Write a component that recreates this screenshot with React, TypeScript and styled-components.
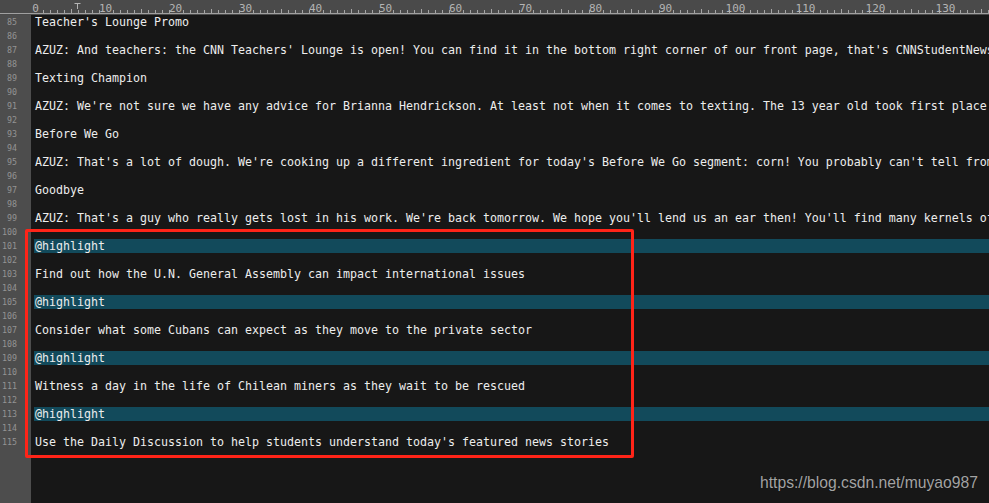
import React from "react";
import styled, { createGlobalStyle } from "styled-components";

const Global = createGlobalStyle`
  html, body { margin: 0; padding: 0; background: #171717; }
  body { width: 989px; height: 503px; overflow: hidden; }
`;

const Page = styled.div`
  position: relative;
  width: 989px;
  height: 503px;
  display: flex;
  flex-direction: column;
  background: #171717;
  overflow: hidden;
`;

const RulerBar = styled.div`
  height: 15px;
  flex: none;
  background: #4a4a4a;
`;

const Body = styled.div`
  flex: 1;
  display: flex;
  min-height: 0;
`;

const Gutter = styled.div`
  width: 31px;
  flex: none;
  background: #4d4d4d;
  display: flex;
  flex-direction: column;
`;

const LineNo = styled.div`
  height: 14px;
  width: 17px;
  text-align: right;
  font-family: "DejaVu Sans Mono", monospace;
  font-size: 8.3px;
  line-height: 14px;
  color: #949494;
`;

const Editor = styled.div`
  flex: 1;
  display: flex;
  flex-direction: column;
  overflow: hidden;
`;

const CodeLine = styled.div<{ $hl?: boolean }>`
  height: 14px;
  margin-left: 3px;
  padding-left: 1px;
  background: ${(p) => (p.$hl ? "#124a5b" : "transparent")};
  font-family: "DejaVu Sans Mono", monospace;
  font-size: 11.63px;
  line-height: 14px;
  color: #ededed;
  white-space: pre;
  overflow: hidden;
`;

const Marker = styled.div`
  position: absolute;
  left: 25px;
  top: 229px;
  width: 603px;
  height: 223px;
  border: 3px solid #ff2418;
  border-radius: 2px;
  pointer-events: none;
`;

const Watermark = styled.div`
  position: absolute;
  right: 11px;
  top: 475px;
  font-family: "Liberation Sans", Arial, sans-serif;
  font-size: 15.7px;
  line-height: 1;
  color: #a3a3a3;
  text-shadow: 0 0 1px rgba(0, 0, 0, 0.6);
`;

const lines: string[] = [
  "Teacher's Lounge Promo",
  "",
  "AZUZ: And teachers: the CNN Teachers' Lounge is open! You can find it in the bottom right corner of our front page, that's CNNStudentNews.com.",
  "",
  "Texting Champion",
  "",
  "AZUZ: We're not sure we have any advice for Brianna Hendrickson. At least not when it comes to texting. The 13 year old took first place in the national championship.",
  "",
  "Before We Go",
  "",
  "AZUZ: That's a lot of dough. We're cooking up a different ingredient for today's Before We Go segment: corn! You probably can't tell from this picture.",
  "",
  "Goodbye",
  "",
  "AZUZ: That's a guy who really gets lost in his work. We're back tomorrow. We hope you'll lend us an ear then! You'll find many kernels of news.",
  "",
  "@highlight",
  "",
  "Find out how the U.N. General Assembly can impact international issues",
  "",
  "@highlight",
  "",
  "Consider what some Cubans can expect as they move to the private sector",
  "",
  "@highlight",
  "",
  "Witness a day in the life of Chilean miners as they wait to be rescued",
  "",
  "@highlight",
  "",
  "Use the Daily Discussion to help students understand today's featured news stories",
];

const FIRST = 85;
const COL0 = 35.5;
const CW = 7;

function Ruler() {
  const ticks: React.ReactNode[] = [];
  const labels: React.ReactNode[] = [];
  for (let c = 0; c <= 136; c++) {
    const x = Math.round(COL0 + c * CW) + 0.5;
    const h = c % 10 === 0 ? 0 : c % 5 === 0 ? 4 : 3;
    if (h) ticks.push(<line key={c} x1={x} x2={x} y1={13} y2={13 - h} stroke="#a6a6a6" strokeWidth={1} />);
    if (c % 10 === 0) {
      labels.push(
        <text
          key={"t" + c}
          x={COL0 + c * CW}
          y={12}
          textAnchor="middle"
          fontFamily="DejaVu Sans Mono, monospace"
          fontSize={11}
          fill="#b4b4b4"
        >
          {c}
        </text>
      );
    }
  }
  return (
    <RulerBar>
      <svg width={989} height={15} style={{ display: "block" }}>
        <line x1={0} x2={989} y1={13.5} y2={13.5} stroke="#a0a0a0" strokeWidth={1} />
        {ticks}
        {labels}
        <path d="M74.5 3.5 H80.5 M77.5 3.5 V9" stroke="#b4b4b4" strokeWidth={1} fill="none" />
      </svg>
    </RulerBar>
  );
}

export default function App() {
  return (
    <>
      <Global />
      <Page>
        <Ruler />
        <Body>
          <Gutter>
            {lines.map((_, i) => (
              <LineNo key={i}>{FIRST + i}</LineNo>
            ))}
          </Gutter>
          <Editor>
            {lines.map((t, i) => (
              <CodeLine key={i} $hl={t === "@highlight"}>
                {t}
              </CodeLine>
            ))}
          </Editor>
        </Body>
        <Marker />
        <Watermark>https://blog.csdn.net/muyao987</Watermark>
      </Page>
    </>
  );
}
